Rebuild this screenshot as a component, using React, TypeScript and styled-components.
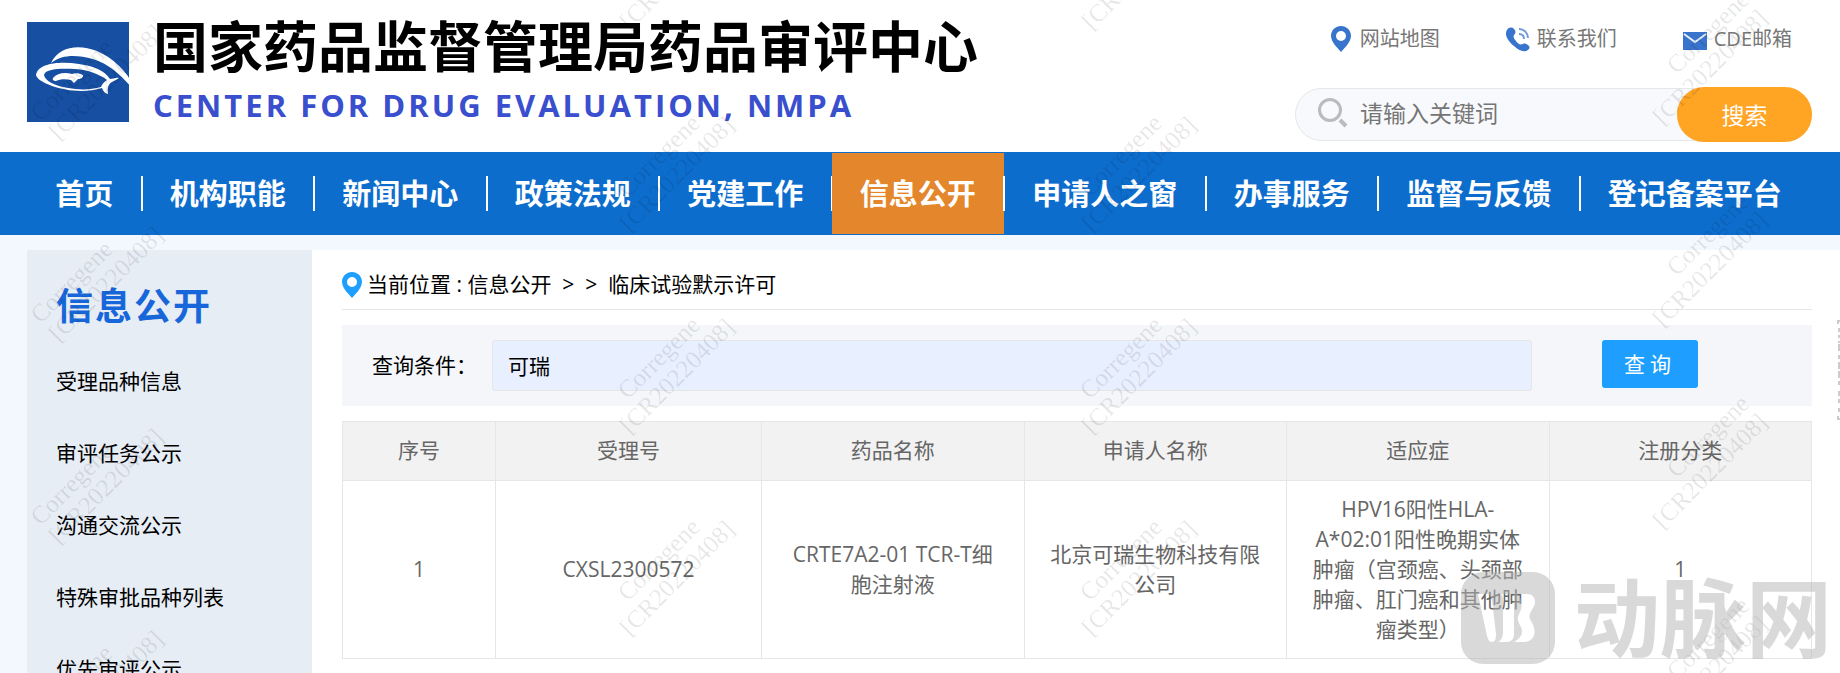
import React from 'react';
import styled, { createGlobalStyle, css } from 'styled-components';

const GlobalStyle = createGlobalStyle`
  *, *::before, *::after { box-sizing: border-box; }
  body {
    margin: 0;
    background: #f3f7fe;
    color: #000;
    font-family: 'Open Sans', 'Noto Sans CJK SC', sans-serif;
    font-size: 21px;
  }
  button, input { font-family: inherit; }
  a { color: inherit; text-decoration: none; }
`;

const Shell = styled.div`
  position: relative;
  display: flex;
  flex-direction: column;
  height: 100vh;
  overflow: hidden;
`;

const Header = styled.header`
  display: flex;
  flex: none;
  justify-content: space-between;
  height: 152px;
  padding: 0 28px 0 27px;
  background: #fff;
`;

const Brand = styled.div`
  display: flex;
  gap: 16px;
  padding-top: 13px;
`;

const Emblem = styled.svg`
  flex: none;
  width: 110px;
  height: 100px;
  margin-top: 9px;
`;

const SiteName = styled.h1`
  margin: 0;
  font-size: 55px;
  line-height: 66px;
  font-weight: 700;
  white-space: nowrap;
`;

const SiteNameEn = styled.p`
  margin: 6px 0 0;
  color: #3a4fce;
  font-size: 31px;
  line-height: 40px;
  font-weight: 700;
  letter-spacing: 3px;
  white-space: nowrap;
`;

const Tools = styled.div`
  display: flex;
  flex-direction: column;
  align-items: flex-end;
  padding-top: 24px;
`;

const QuickLinks = styled.div`
  display: flex;
  gap: 66px;
  margin-right: 20px;
`;

const QuickLink = styled.a`
  display: flex;
  align-items: center;
  gap: 7px;
  color: #777;
  font-size: 20px;
  line-height: 30px;
  white-space: nowrap;

  svg { width: 24px; height: 26px; }
`;

const SiteSearch = styled.form`
  display: flex;
  align-items: center;
  width: 517px;
  height: 55px;
  margin-top: 33px;
`;

const SearchField = styled.label`
  display: flex;
  flex: 1;
  align-items: center;
  gap: 12px;
  height: 53px;
  margin-right: -40px;
  padding: 0 48px 4px 22px;
  border: 1px solid #e6e6e6;
  border-radius: 27px;
  background: #f8f9fd;

  svg { flex: none; width: 30px; height: 30px; }
  input {
    flex: 1;
    min-width: 0;
    padding: 0;
    border: 0;
    outline: 0;
    background: none;
    font-size: 23px;
  }
  input::placeholder { color: #757575; }
`;

const SearchButton = styled.button`
  position: relative;
  width: 135px;
  height: 55px;
  padding: 0 0 2px;
  border: 0;
  border-radius: 27px;
  background: #ffa423;
  color: #fff;
  font-size: 23px;
`;

const Nav = styled.nav`
  display: flex;
  flex: none;
  height: 83px;
  padding: 1px 30px 1px 27px;
  background: #0d6dcd;
`;

const NavItem = styled.a<{ $active?: boolean; $last?: boolean }>`
  position: relative;
  display: flex;
  flex: 1 0 auto;
  align-items: center;
  justify-content: center;
  padding: 0 28px 4px;
  color: #fff;
  font-size: 29px;
  font-weight: 700;
  white-space: nowrap;
  ${(p) => p.$active && css`background: #e4862b;`}
  ${(p) =>
    !p.$last &&
    css`
      &::after {
        content: '';
        position: absolute;
        right: -1px;
        top: 23px;
        width: 2px;
        height: 35px;
        background: #fff;
      }
    `}
`;

const Body = styled.div`
  display: flex;
  flex: 1;
  min-height: 0;
  padding: 15px 0 0 27px;
`;

const Sidebar = styled.aside`
  flex: none;
  width: 285px;
  padding: 28px 29px 0;
  background: #e7edf5;
`;

const SideTitle = styled.h2`
  margin: 0 0 20px;
  color: #1767da;
  font-size: 37px;
  line-height: 56px;
  letter-spacing: 2px;
`;

const SideLink = styled.a`
  display: block;
  line-height: 32px;
  padding: 11px 0 29px;
`;

const Main = styled.main`
  flex: 1;
  min-width: 0;
  padding: 8px 28px 0 30px;
  background: #fff;
`;

const Breadcrumb = styled.nav`
  display: flex;
  align-items: center;
  height: 52px;
  padding-bottom: 1px;
  border-bottom: 1px solid #e6e6e6;
  white-space: pre;

  svg { width: 20px; height: 26px; margin: 4px 5px 0 0; }
`;

const QueryBar = styled.form`
  display: flex;
  align-items: flex-start;
  margin-top: 15px;
  padding: 15px 114px 15px 30px;
  background: #f4f6fa;
`;

const QueryLabel = styled.label`
  width: 120px;
  line-height: 50px;
`;

const QueryInput = styled.input`
  flex: 1;
  height: 51px;
  padding: 0 15px 2px;
  border: 1px solid #e6e6e6;
  border-radius: 3px;
  outline: 0;
  background: #e8effe;
  font-size: 21px;
`;

const QueryButton = styled.button`
  width: 96px;
  height: 48px;
  margin-left: 70px;
  padding: 0 6px 2px;
  border: 0;
  border-radius: 3px;
  background: #1e9fff;
  color: #fff;
  font-size: 21px;
  letter-spacing: 5px;
`;

const Table = styled.table`
  width: 100%;
  margin-top: 15px;
  border-collapse: collapse;
  table-layout: fixed;
  color: #666;
  line-height: 30px;
  text-align: center;

  th, td { border: 1px solid #e6e6e6; padding: 13px 22px 14px; }
  th { background: #f2f2f2; font-weight: 400; padding-bottom: 15px; }
  th:first-child { width: 153px; }
  th:nth-child(2) { width: 266px; }
`;

const Overlay = styled.div`
  position: absolute;
  inset: 0;
  overflow: hidden;
  pointer-events: none;
`;

const Stamp = styled.div<{ $x: number; $y: number; $align: string }>`
  position: absolute;
  left: ${(p) => p.$x}px;
  top: ${(p) => p.$y}px;
  width: 150px;
  height: 52px;
  margin: -26px 0 0 -75px;
  transform: rotate(-45deg);
  color: rgba(0, 0, 0, 0.1);
  font-family: 'Liberation Serif', serif;
  font-size: 25px;
  line-height: 26px;
  text-align: ${(p) => p.$align};
`;

const EdgeMark = styled.svg`
  position: absolute;
  right: 0;
  top: 320px;
  width: 3px;
  height: 100px;
`;

const Publisher = styled.div`
  position: absolute;
  right: 8px;
  bottom: 0;
  display: flex;
  align-items: center;
  gap: 19px;
  color: #b5b5b5;
  opacity: 0.5;
  font-size: 86px;
  line-height: 110px;
  font-weight: 700;

  svg { width: 94px; height: 92px; }
`;

const NAV = ['首页', '机构职能', '新闻中心', '政策法规', '党建工作', '信息公开', '申请人之窗', '办事服务', '监督与反馈', '登记备案平台'];
const SIDE = ['受理品种信息', '审评任务公示', '沟通交流公示', '特殊审批品种列表', '优先审评公示'];
const COLUMNS = ['序号', '受理号', '药品名称', '申请人名称', '适应症', '注册分类'];
const ROWS = [
  ['1', 'CXSL2300572', 'CRTE7A2-01 TCR-T细胞注射液', '北京可瑞生物科技有限公司', 'HPV16阳性HLA-A*02:01阳性晚期实体肿瘤（宫颈癌、头颈部肿瘤、肛门癌和其他肿瘤类型）', '1'],
];
const STAMP_COLUMNS = [
  { x: 97, y: 73, align: 'left' },
  { x: 668, y: -37, align: 'center' },
  { x: 1130, y: -37, align: 'center' },
  { x: 1701, y: 58, align: 'right' },
];

const Pin = ({ color }: { color: string }) => (
  <svg viewBox="0 0 20 26" aria-hidden="true">
    <path fill={color} fillRule="evenodd" d="M10 0C4.500 0 0 4.400 0 9.800 0 13 1.600 16 4 19.200L10 26l6-6.800c2.400-3.200 4-6.200 4-9.400C20 4.400 15.500 0 10 0Zm0 5a5 5 0 1 1 0 10 5 5 0 0 1 0-10Z" />
  </svg>
);

export default function App() {
  return (
    <Shell>
      <GlobalStyle />
      <Header>
        <Brand>
          <Emblem viewBox="0 0 110 100" role="img" aria-label="CDE">
            <rect width="102" height="100" fill="#174fa3" />
            <g fill="#fff">
              <path d="M24 41C32 24 52 22 70 29c16 7 30 20 37 36l-2 1C94 53 82 42 66 37 50 33 36 32 24 41Z" />
              <path fillRule="evenodd" d="M9 53c2-12 24-14 43-11 15 2 26 7 31 15 3 0 6-2 9-1-4 3-9 4-10 7-2 3-1 5-1 9-4-1-5-4-6-6-16 5-36 3-50-2-10-4-15-7-16-11Zm8 0c1 6 11 11 24 13 11 2 23 2 33-1 1-3 3-5 6-7-8-6-18-10-32-11-16-1-30 0-31 6Z" />
              <path d="M26 56c4-5 12-6 19-4 3-1 7-1 11 1 0 3-2 4-5 4l-4 4-3-3c-5-1-11-1-15 1-2 0-4-1-3-3Z" />
            </g>
          </Emblem>
          <div>
            <SiteName>国家药品监督管理局药品审评中心</SiteName>
            <SiteNameEn>CENTER FOR DRUG EVALUATION, NMPA</SiteNameEn>
          </div>
        </Brand>
        <Tools>
          <QuickLinks>
            <QuickLink href="#map"><Pin color="#3874cb" />网站地图</QuickLink>
            <QuickLink href="#contact">
              <svg viewBox="0 0 24 26" aria-hidden="true">
                <path fill="#3874cb" d="M1 4C3 1 6 1 8 3c2 2 2 4 0 6-1 2 0 4 2 6 2 3 4 4 7 3 2-1 3 0 5 1 2 2 2 3 0 5-4 3-10 0-14-4C2 15-2 9 1 4Z" />
                <path fill="none" stroke="#6f9add" strokeWidth="2" d="M13 8c3 0 5 2 5 5M13 3c5 0 9 4 9 9" />
              </svg>
              联系我们
            </QuickLink>
            <QuickLink href="#mail">
              <svg viewBox="0 0 24 26" aria-hidden="true">
                <path fill="#3874cb" d="M0 6h24v18H0z" />
                <path fill="none" stroke="#e8f0fb" strokeWidth="2" d="m1 8 11 8 11-8" />
              </svg>
              CDE邮箱
            </QuickLink>
          </QuickLinks>
          <SiteSearch>
            <SearchField>
              <svg viewBox="0 0 30 30" fill="none" stroke="#bbb" aria-hidden="true">
                <circle cx="12" cy="12" r="10.500" strokeWidth="3" />
                <path d="m22 22 6 6" strokeWidth="4" />
              </svg>
              <input type="text" placeholder="请输入关键词" aria-label="请输入关键词" />
            </SearchField>
            <SearchButton type="button">搜索</SearchButton>
          </SiteSearch>
        </Tools>
      </Header>
      <Nav>
        {NAV.map((label, i) => (
          <NavItem key={label} href={`#nav-${i}`} $active={i === 5} $last={i === NAV.length - 1}>{label}</NavItem>
        ))}
      </Nav>
      <Body>
        <Sidebar>
          <SideTitle>信息公开</SideTitle>
          {SIDE.map((label, i) => <SideLink key={label} href={`#side-${i}`}>{label}</SideLink>)}
        </Sidebar>
        <Main>
          <Breadcrumb>
            <Pin color="#1e9fff" />
            {'当前位置 : 信息公开  >  >  临床试验默示许可'}
          </Breadcrumb>
          <QueryBar>
            <QueryLabel htmlFor="query">查询条件：</QueryLabel>
            <QueryInput id="query" type="text" defaultValue="可瑞" />
            <QueryButton type="button">查询</QueryButton>
          </QueryBar>
          <Table>
            <thead>
              <tr>{COLUMNS.map((c) => <th key={c} scope="col">{c}</th>)}</tr>
            </thead>
            <tbody>
              {ROWS.map((row) => (
                <tr key={row[1]}>{row.map((cell, i) => <td key={COLUMNS[i]}>{cell}</td>)}</tr>
              ))}
            </tbody>
          </Table>
        </Main>
      </Body>
      <Overlay aria-hidden="true">
        {STAMP_COLUMNS.map(({ x, y, align }) =>
          [0, 1, 2, 3].map((row) => (
            <Stamp key={`${x}-${row}`} $x={x} $y={y + row * 202} $align={align}>
              Corregene<br />[CR20220408]
            </Stamp>
          )),
        )}
        <EdgeMark viewBox="0 0 3 100">
          <path fill="#ccc" d="M0 0h3v2H2v2H0ZM1 8h2v4H1ZM1 15h2v3H1ZM1 21h2v2H1ZM1 24h2v7H1ZM1 35h2v4H1ZM1 42h2v7H1ZM1 51h2v7H1ZM1 61h2v4H1ZM1 71h2v5H1ZM1 79h2v4H1ZM1 88h2v4H1ZM0 96h2v2h1v2H0Z" />
        </EdgeMark>
        <Publisher>
          <svg viewBox="0 0 94 92">
            <path fill="currentColor" fillRule="evenodd" d="M22 0h50a22 22 0 0 1 22 22v48a22 22 0 0 1-22 22H22A22 22 0 0 1 0 70V22A22 22 0 0 1 22 0ZM17 22h8c4 0 5 2 6 6l4 34c0 5-1 8-4 8s-4-3-5-6ZM40 22h13v40c0 5-3 8-7 8h-9c4-2 5-6 5-10V30c0-4 0-6-2-8ZM56 22h10c8 0 10 8 6 14-3 5-5 8-2 13 6 9 5 21-8 21h-9c5-3 8-6 8-11 0-6-7-9-3-17 4-7 4-15-2-20Z" />
          </svg>
          <span>动脉网</span>
        </Publisher>
      </Overlay>
    </Shell>
  );
}
